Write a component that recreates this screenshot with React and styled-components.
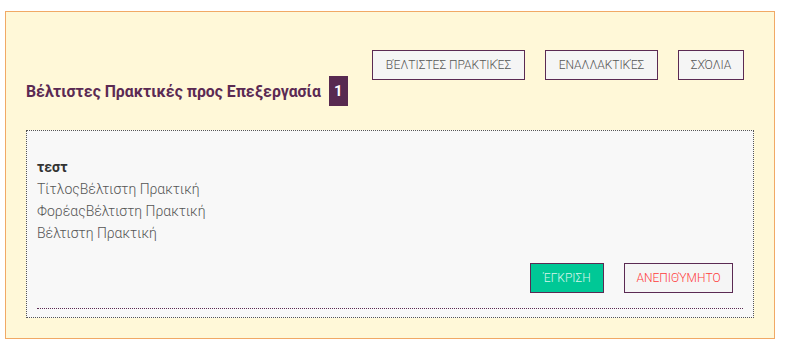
import React from "react";
import styled, { createGlobalStyle } from "styled-components";

const GlobalStyle = createGlobalStyle`
  body {
    margin: 0;
    background: #ffffff;
    font-family: Roboto, "Noto Sans", sans-serif;
  }
`;

const Panel = styled.div`
  margin: 11px 0 0 5px;
  width: 770px;
  height: 328px;
  box-sizing: border-box;
  background: #fff8d8;
  border: 1px solid #f1a965;
  padding: 0 20px;
`;

const Header = styled.div`
  display: flex;
  justify-content: space-between;
  align-items: flex-start;
  padding-top: 38px;
`;

const Title = styled.h3`
  margin: 26px 0 0 0;
  height: 30px;
  display: flex;
  align-items: center;
  gap: 8px;
  font-size: 15.8px;
  font-weight: 700;
  color: #5b2a53;
`;

const Badge = styled.span`
  display: inline-flex;
  align-items: center;
  justify-content: center;
  width: 19px;
  height: 30px;
  background: #582a50;
  color: #ffffff;
  font-size: 15px;
  font-weight: 700;
`;

const Tabs = styled.div`
  display: flex;
  gap: 20px;
  padding-right: 10px;
`;

const Button = styled.button`
  width: ${(p) => p.$w}px;
  height: 30px;
  box-sizing: border-box;
  padding: 0;
  border: 1px solid #5b2a53;
  background: ${(p) => p.$bg || "#f5f5f5"};
  color: ${(p) => p.$color || "#555555"};
  font-family: Roboto, "Noto Sans", sans-serif;
  font-size: 12px;
  font-weight: 300;
  cursor: pointer;
`;

const Card = styled.div`
  margin-top: 24px;
  height: 188px;
  box-sizing: border-box;
  border: 1px dotted #555555;
  background: #f8f8f8;
  padding: 25px 10px 0 10px;
`;

const Lines = styled.div`
  font-size: 14px;
  line-height: 22px;
  font-weight: 300;
  color: #555555;
`;

const Name = styled.div`
  font-weight: 700;
  color: #333333;
`;

const Actions = styled.div`
  display: flex;
  justify-content: flex-end;
  gap: 20px;
  margin-top: 19px;
  padding-right: 10px;
  padding-bottom: 15px;
  border-bottom: 1px dotted #5b2a53;
`;

export default function App() {
  return (
    <>
      <GlobalStyle />
      <Panel>
        <Header>
          <Title>
            Βέλτιστες Πρακτικές προς Επεξεργασία
            <Badge>1</Badge>
          </Title>
          <Tabs>
            <Button $w={153}>ΒΈΛΤΙΣΤΕΣ ΠΡΑΚΤΙΚΈΣ</Button>
            <Button $w={113}>ΕΝΑΛΛΑΚΤΙΚΈΣ</Button>
            <Button $w={66}>ΣΧΌΛΙΑ</Button>
          </Tabs>
        </Header>
        <Card>
          <Lines>
            <Name>τεστ</Name>
            <div>ΤίτλοςΒέλτιστη Πρακτική</div>
            <div>ΦορέαςΒέλτιστη Πρακτική</div>
            <div>Βέλτιστη Πρακτική</div>
          </Lines>
          <Actions>
            <Button $w={74} $bg="#00c896" $color="#d8f5ec">ΈΓΚΡΙΣΗ</Button>
            <Button $w={109} $color="#ff3b3b">ΑΝΕΠΙΘΎΜΗΤΟ</Button>
          </Actions>
        </Card>
      </Panel>
    </>
  );
}
